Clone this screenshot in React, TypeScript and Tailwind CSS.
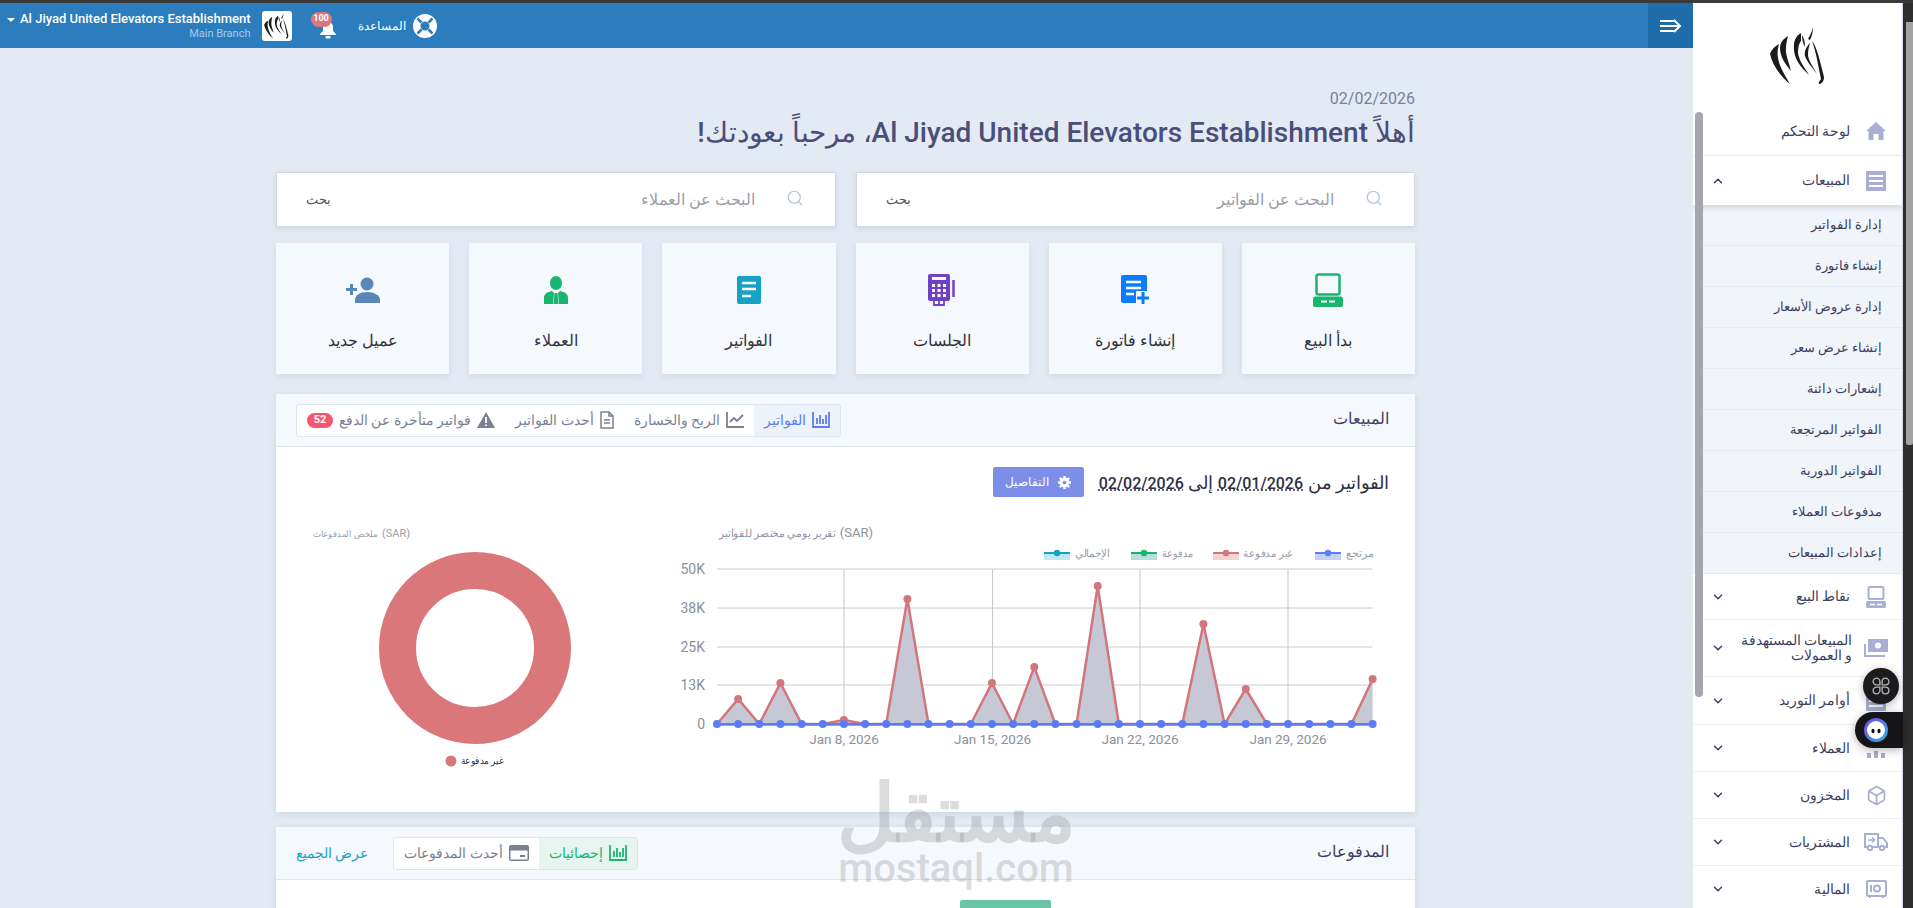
import { Box, ChevronDown, ChevronUp, Search } from "lucide-react";
import type { ReactNode } from "react";

const Horse = ({ className }: { className: string }) => (
  <svg viewBox="0 0 55 58" className={className} fill="#1b1b1b">
    <path d="M9 17C4 20 1 23 0 27 2 37 10 49 20 57 14 47 9 38 8 31 7 26 8 21 9 17Z" />
    <path d="M18 9C13 12 10 16 10 21 10 29 15 37 21 44 19 35 15 27 16 21 16 17 17 13 18 9Z" />
    <path d="M31 6C27 8 24 13 24 18 23 27 27 35 33 42 35 44 37 46 39 48 35 41 29 34 28 26 28 20 29 16 31 14 31 11 31 8 31 6Z" />
    <path d="M32 8C34 11 35 15 35 20 33 17 32 12 32 8Z" />
    <path d="M43 0C42 5 40 8 38 12L40 13C42 9 43 5 43 0Z" />
    <path d="M40 16C36 20 34 25 35 29 37 35 42 40 47 47 43 39 38 34 38 27 38 23 39 20 40 16Z" />
    <path d="M42 14C47 20 50 34 54 50 54 54 52 57 49 57 48 55 50 54 51 52 48 38 46 24 42 14Z" />
  </svg>
);

const HomeIcon = () => (
  <svg viewBox="0 0 20 18" className="w-5 h-[18px]" fill="#a9afd3">
    <path d="M10 0 20 9h-2.500v9h-5v-6h-5v6h-5V9H0Z" />
  </svg>
);
const ListIcon = () => (
  <svg viewBox="0 0 20 20" className="w-5 h-5">
    <rect width="20" height="20" fill="#a9afd3" />
    <path d="M3 5h14M3 10h14M3 15h14" stroke="#fff" strokeWidth="2" />
  </svg>
);
const PosIcon = () => (
  <svg viewBox="0 0 20 22" className="w-5 h-[22px]" fill="none">
    <rect x="2.500" y="1" width="15" height="12" rx="1.500" stroke="#a9afd3" strokeWidth="2" />
    <rect y="15" width="20" height="7" rx="1.500" fill="#a9afd3" />
    <path d="M4 18.500h5M11 18.500h5" stroke="#fff" strokeWidth="1.500" />
  </svg>
);
const MoneyIcon = () => (
  <svg viewBox="0 0 24 18" className="w-6 h-[18px]" fill="none">
    <rect x="4" y="0" width="20" height="13" fill="#a9afd3" />
    <circle cx="14" cy="6.500" r="3" fill="#fff" />
    <path d="M1 5v12h20" stroke="#a9afd3" strokeWidth="2" />
  </svg>
);
const TruckIcon = () => (
  <svg viewBox="0 0 24 18" className="w-6 h-[18px]" fill="none" stroke="#a9afd3" strokeWidth="2">
    <path d="M3 14H1V1h13v13H9M14 5h5l4 5v4h-2M14 14h1" />
    <circle cx="6" cy="15" r="2.200" />
    <circle cx="18" cy="15" r="2.200" />
    <path d="M4 7h6M8 4.500 10.500 7 8 9.500" strokeWidth="1.500" />
  </svg>
);
const SafeIcon = () => (
  <svg viewBox="0 0 21 18" className="w-[21px] h-[18px]" fill="none" stroke="#a9afd3" strokeWidth="2">
    <rect x="1" y="1" width="19" height="15" rx="1" />
    <circle cx="11" cy="8.500" r="3" />
    <path d="M5 5v7M4 17v1M17 17v1" />
  </svg>
);
const PeopleIcon = () => (
  <svg viewBox="0 0 20 20" className="w-5 h-5" fill="#a9afd3">
    <circle cx="10" cy="6" r="4" />
    <path d="M1 20v-5h4v5ZM8 20v-7h4v7ZM15 20v-5h4v5Z" />
  </svg>
);

type NavItem = { label: string; icon: ReactNode; h: string; mr: string };

const navRest: NavItem[] = [
  { label: "نقاط البيع", icon: <PosIcon />, h: "h-[46px]", mr: "mr-[14px]" },
  { label: "المبيعات المستهدفة و العمولات", icon: <MoneyIcon />, h: "h-[57px]", mr: "mr-[12px]" },
  { label: "أوامر التوريد", icon: <ListIcon />, h: "h-[48px]", mr: "mr-[14px]" },
  { label: "العملاء", icon: <PeopleIcon />, h: "h-[47px]", mr: "mr-[14px]" },
  { label: "المخزون", icon: <Box size={21} color="#a9afd3" strokeWidth={2} />, h: "h-[47px]", mr: "mr-[14px]" },
  { label: "المشتريات", icon: <TruckIcon />, h: "h-[47px]", mr: "mr-[14px]" },
  { label: "المالية", icon: <SafeIcon />, h: "h-[47px]", mr: "mr-[14px]" },
];

const subItems = [
  "إدارة الفواتير",
  "إنشاء فاتورة",
  "إدارة عروض الأسعار",
  "إنشاء عرض سعر",
  "إشعارات دائنة",
  "الفواتير المرتجعة",
  "الفواتير الدورية",
  "مدفوعات العملاء",
  "إعدادات المبيعات",
];

const Sidebar = () => (
  <aside className="relative w-[210px] shrink-0 bg-white border-r border-[#d3d9e4] overflow-hidden">
    <div className="h-[104px] flex items-center justify-center pt-[2px]">
      <Horse className="w-[55px] h-[58px]" />
    </div>
    <div className="h-[49px] flex items-center border-b border-[#eef0f4] pr-[15px]">
      <span className="w-[22px] flex justify-center"><HomeIcon /></span>
      <span className="mr-[15px] text-[14px] font-medium text-[#3d3f63]">لوحة التحكم</span>
    </div>
    <div className="relative h-[49px] flex items-center pr-[15px] shadow-[0_3px_6px_rgba(60,70,100,0.18)]">
      <span className="w-[22px] flex justify-center"><ListIcon /></span>
      <span className="mr-[15px] text-[14px] font-medium text-[#3d3f63]">المبيعات</span>
      <ChevronUp size={14} color="#3d3f63" strokeWidth={2.500} className="mr-auto ml-[18px]" />
    </div>
    <div className="bg-[#f1f4f9]">
      {subItems.map((s) => (
        <div key={s} className="h-[41px] flex items-center border-b border-[#e6eaf0] pr-[20px] text-[13px] font-medium text-[#3d3f63]">
          {s}
        </div>
      ))}
    </div>
    {navRest.map((n) => (
      <div key={n.label} className={`${n.h} flex items-center border-b border-[#eef0f4] pr-[14px]`}>
        <span className="w-[24px] flex justify-center shrink-0">{n.icon}</span>
        <span className={`${n.mr} w-[115px] text-[14px] leading-[15px] font-medium text-[#3d3f63]`}>{n.label}</span>
        <ChevronDown size={14} color="#3d3f63" strokeWidth={2.500} className="mr-auto ml-[18px] shrink-0" />
      </div>
    ))}
    <div className="absolute left-[2px] top-[109px] h-[585px] w-[8px] rounded-full bg-[#a6a7ae]" />
  </aside>
);

const Lifebuoy = () => (
  <svg viewBox="0 0 24 24" className="w-6 h-6">
    <circle cx="12" cy="12" r="12" fill="#fff" />
    <circle cx="12" cy="12" r="4.500" fill="#2b7dbd" />
    <path d="M4.500 4.500 8.500 8.500M19.500 4.500 15.500 8.500M4.500 19.500 8.500 15.500M19.500 19.500 15.500 15.500" stroke="#2b7dbd" strokeWidth="2.500" />
  </svg>
);

const Bell = () => (
  <svg viewBox="0 0 18 18" className="w-[18px] h-[18px]" fill="#fff">
    <path d="M9 1c3 0 5 2 5 5v4l3 3v1H1v-1l3-3V6c0-3 2-5 5-5Z" />
    <rect x="6.500" y="15" width="5" height="2.500" rx="1.200" />
  </svg>
);

const Topbar = () => (
  <header className="h-[45px] shrink-0 bg-[#2b7dbd] flex items-stretch justify-between">
    <div className="w-[45px] bg-[#1f6cab] flex items-center justify-center">
      <svg viewBox="0 0 22 14" className="w-[22px] h-[14px]" fill="none" stroke="#fff" strokeWidth="2">
        <path d="M0 2h14M0 7h19M0 12h14M14 1l6 6-6 6" />
      </svg>
    </div>
    <div className="flex items-center pl-[7px]">
      <Lifebuoy />
      <span className="mr-[7px] text-[12px] text-white">المساعدة</span>
      <div className="relative mr-[21px] w-[18px] h-[18px] mt-[8px]">
        <Bell />
        <span className="absolute -top-[9px] left-[-8px] w-[21px] h-[15px] rounded-full bg-[#d9777b] text-white text-[9px] font-bold flex items-center justify-center">100</span>
      </div>
      <div className="mr-[27px] w-[30px] h-[30px] rounded-[3px] bg-white flex items-center justify-center">
        <Horse className="w-[25px] h-[26px]" />
      </div>
      <div className="mr-[11px] flex flex-col items-start leading-none">
        <span dir="ltr" className="text-[13px] font-medium text-white">Al Jiyad United Elevators Establishment</span>
        <span dir="ltr" className="mt-[3px] text-[11px] text-[#a5c9ea]">Main Branch</span>
      </div>
      <div className="mr-[5px] mb-[12px] border-x-[4px] border-x-transparent border-t-[4px] border-t-white" />
    </div>
  </header>
);

const SearchBox = ({ placeholder }: { placeholder: string }) => (
  <div className="h-[55px] bg-white border border-[#d4d8e0] shadow-[0_2px_5px_rgba(80,90,120,0.12)] flex items-center pr-[31px] pl-[29px]">
    <Search size={18} color="#b5c3d4" strokeWidth={1.600} className="mb-[3px]" />
    <span className="mr-[31px] text-[16px] text-[#9a9ea8]">{placeholder}</span>
    <span className="mr-auto text-[13px] text-[#54566b]">بحث</span>
  </div>
);

const CardPos = () => (
  <svg viewBox="0 0 30 34" className="w-[30px] h-[34px]" fill="none">
    <rect x="3.500" y="1.500" width="23" height="20" rx="2" stroke="#19b56f" strokeWidth="2.500" />
    <rect y="23.500" width="30" height="10.500" rx="2" fill="#19b56f" />
    <path d="M8 28.500h6M16 28.500h6" stroke="#fff" strokeWidth="2" />
  </svg>
);
const CardInvoice = () => (
  <svg viewBox="0 0 30 30" className="w-[30px] h-[30px]">
    <path d="M3 0h22a2 2 0 0 1 2 2v14H16v12H3a2 2 0 0 1-2-2V2a2 2 0 0 1 2-2Z" fill="#0a7cff" />
    <path d="M6 7h15M6 13h15M6 19h8" stroke="#fff" strokeWidth="2.500" />
    <path d="M23 17v12M17 23h12" stroke="#0a7cff" strokeWidth="3" />
  </svg>
);
const CardCalc = () => (
  <svg viewBox="0 0 28 32" className="w-[28px] h-[32px]" fill="none">
    <rect x="0" y="0" width="22" height="27" rx="2" fill="#7040c8" />
    <rect x="4" y="3" width="14" height="3" fill="#fff" />
    <path d="M4 10h3v3H4ZM9.500 10h3v3h-3ZM15 10h3v3h-3ZM4 15h3v3H4ZM9.500 15h3v3h-3ZM15 15h3v3h-3ZM4 20h3v3H4ZM9.500 20h3v3h-3ZM15 20h3v3h-3Z" fill="#fff" />
    <path d="M25.500 6v17" stroke="#7040c8" strokeWidth="2.500" />
    <path d="M6 27v4h10v-4M11 27v4" stroke="#7040c8" strokeWidth="1.800" />
  </svg>
);
const CardDoc = () => (
  <svg viewBox="0 0 24 28" className="w-[24px] h-[28px]">
    <rect width="24" height="28" rx="2" fill="#14a3c4" />
    <path d="M5 7h14M5 13h14M5 20h9" stroke="#fff" strokeWidth="2.600" />
  </svg>
);
const CardPerson = () => (
  <svg viewBox="0 0 24 28" className="w-[24px] h-[28px]" fill="#19b56f">
    <ellipse cx="12" cy="7" rx="6" ry="7" />
    <path d="M0 28v-6c0-4 3-6 8-7l2 2-1 11ZM24 28v-6c0-4-3-6-8-7l-2 2 1 11Z" />
    <path d="M10.500 17h3l1 11h-5Z" />
  </svg>
);
const CardAddUser = () => (
  <svg viewBox="0 0 34 26" className="w-[34px] h-[26px]" fill="#5a87b8">
    <circle cx="21" cy="7" r="6.500" />
    <path d="M9 26v-3c0-5 5-8 12-8s13 3 13 8v3Z" />
    <path d="M0 11h11v3H0ZM4 7h3v11H4Z" />
  </svg>
);

const actions: { label: string; icon: ReactNode }[] = [
  { label: "بدأ البيع", icon: <CardPos /> },
  { label: "إنشاء فاتورة", icon: <CardInvoice /> },
  { label: "الجلسات", icon: <CardCalc /> },
  { label: "الفواتير", icon: <CardDoc /> },
  { label: "العملاء", icon: <CardPerson /> },
  { label: "عميل جديد", icon: <CardAddUser /> },
];

const BarsIcon = ({ color }: { color: string }) => (
  <svg viewBox="0 0 18 16" className="w-[18px] h-4 shrink-0" fill="none" stroke={color}>
    <path d="M1 0v15h16V0" strokeWidth="1.800" />
    <path d="M5 12V6M8 12V3M11 12V7M14 12V3" strokeWidth="1.800" />
  </svg>
);
const LineChartIcon = () => (
  <svg viewBox="0 0 18 16" className="w-[18px] h-4 shrink-0" fill="none" stroke="#7a7f92" strokeWidth="1.800">
    <path d="M1 0v15h17M4 10l4-4 3 3 6-6" />
  </svg>
);
const FileIcon = () => (
  <svg viewBox="0 0 14 18" className="w-[14px] h-[18px] shrink-0" fill="none" stroke="#7a7f92" strokeWidth="1.500">
    <path d="M1 1h8l4 4v12H1ZM9 1v4h4M4 9h6M4 12h6" />
  </svg>
);
const WarnIcon = () => (
  <svg viewBox="0 0 18 16" className="w-[18px] h-4 shrink-0">
    <path d="M9 0 18 16H0Z" fill="#7a7f92" />
    <path d="M9 5v6M9 12.500v1.500" stroke="#fff" strokeWidth="1.800" />
  </svg>
);
const CardIcon = () => (
  <svg viewBox="0 0 20 16" className="w-5 h-4 shrink-0">
    <rect width="20" height="16" rx="2" fill="#7a7f92" />
    <rect x="1.500" y="5.500" width="17" height="9" fill="#fff" />
    <path d="M11 11h5" stroke="#7a7f92" strokeWidth="2" />
  </svg>
);
const GearIcon = () => (
  <svg viewBox="0 0 14 14" className="w-[13px] h-[13px]">
    <path d="M7 0v14M0 7h14M2 2l10 10M12 2 2 12" stroke="#fff" strokeWidth="2.600" />
    <circle cx="7" cy="7" r="5" fill="#fff" />
    <circle cx="7" cy="7" r="2" fill="#7d8ee8" />
  </svg>
);

const pts = [724, 699, 724, 683, 724, 724, 720, 724, 724, 599, 724, 724, 724, 683, 724, 667, 724, 724, 586, 724, 724, 724, 724, 624, 724, 689, 724, 724, 724, 724, 724, 679];
const px = (i: number) => 40 + i * 21.15;
const py = (y: number) => y - 524;
const redLine = pts.map((y, i) => `${i ? "L" : "M"}${px(i)} ${py(y)}`).join(" ");

const legend = [
  { label: "مرتجع", x: 697, w: 28, sx: 638, color: "#5b7cf5", fill: "#c5d0f5" },
  { label: "غير مدفوعة", x: 616, w: 50, sx: 536, color: "#d3767c", fill: "#f3d3d4" },
  { label: "مدفوعة", x: 516, w: 31, sx: 454, color: "#19b56f", fill: "#b7dfe0" },
  { label: "الإجمالي", x: 433, w: 35, sx: 367, color: "#14a3c4", fill: "#bfe8f5" },
];

const LineChart = () => (
  <svg direction="ltr" viewBox="0 0 712 252" className="w-[712px] h-[252px] shrink-0">
    <text x="196" y="13" textAnchor="end" fontSize="13" fill="#8f93a0">(SAR)</text>
    <text x="159" y="13" direction="rtl" fontSize="10.500" textLength={117} lengthAdjust="spacingAndGlyphs" fill="#8f93a0">تقرير يومي مختصر للفواتير</text>
    {legend.map((l) => (
      <g key={l.label}>
        <rect x={l.sx} y="28" width="26" height="8" fill={l.fill} />
        <path d={`M${l.sx} 29h26`} stroke={l.color} strokeWidth="2" />
        <circle cx={l.sx + 13} cy="29" r="3.200" fill={l.color} />
        <text x={l.x} y="33" direction="rtl" fontSize="11" textLength={l.w} lengthAdjust="spacingAndGlyphs" fill="#9a9ea8">{l.label}</text>
      </g>
    ))}
    {[45, 84, 123, 161, 200].map((y) => (
      <path key={y} d={`M40 ${y}H695.500`} stroke="#c9ccd1" strokeWidth="1" />
    ))}
    {[167, 315.5, 463, 611].map((x) => (
      <path key={x} d={`M${x} 45V200`} stroke="#c4c7cc" strokeWidth="1" />
    ))}
    {[
      ["50K", 45],
      ["38K", 84],
      ["25K", 123],
      ["13K", 161],
      ["0", 200],
    ].map(([t, y]) => (
      <text key={t} x="28" y={Number(y) + 5} textAnchor="end" fontSize="14" fill="#8a8f9c">{t}</text>
    ))}
    {[
      ["Jan 8, 2026", 167],
      ["Jan 15, 2026", 315.5],
      ["Jan 22, 2026", 463],
      ["Jan 29, 2026", 611],
    ].map(([t, x]) => (
      <text key={t} x={x} y="220" textAnchor="middle" fontSize="13.500" fill="#8a8f9c">{t}</text>
    ))}
    <path d={`${redLine} L${px(31)} 200 L40 200Z`} fill="#c6c9d5" />
    <path d={redLine} fill="none" stroke="#d3767c" strokeWidth="2.500" />
    {pts.map((y, i) => y !== 724 && <circle key={i} cx={px(i)} cy={py(y)} r="4" fill="#d3767c" />)}
    <path d="M40 201H695.500" stroke="#19b5a0" strokeWidth="1.500" />
    <path d="M40 200H695.500" stroke="#5b7cf5" strokeWidth="2" />
    {pts.map((_, i) => (
      <circle key={i} cx={px(i)} cy="200" r="4" fill="#5b7cf5" />
    ))}
  </svg>
);

const Donut = () => (
  <svg direction="ltr" viewBox="0 0 375 252" className="w-[375px] h-[252px] shrink-0">
    <text x="108" y="13" textAnchor="end" fontSize="11" fill="#9a9ea8">(SAR)</text>
    <text x="76" y="13" direction="rtl" fontSize="9" textLength={65} lengthAdjust="spacingAndGlyphs" fill="#9a9ea8">ملخص المدفوعات</text>
    <circle cx="173" cy="124" r="77.500" fill="none" stroke="#d9777b" strokeWidth="37" />
    <circle cx="149" cy="237" r="5.500" fill="#d9777b" />
    <text x="201" y="240" direction="rtl" fontSize="9.500" textLength={42} lengthAdjust="spacingAndGlyphs" fill="#333">غير مدفوعة</text>
  </svg>
);

const Tab = ({ icon, label, active, tone, badge }: { icon: ReactNode; label: string; active?: boolean; tone?: string; badge?: string }) => (
  <div className={`h-full flex items-center gap-[6px] px-[10px] text-[14px] ${active ? tone : "text-[#7a7f92]"}`}>
    {icon}
    <span>{label}</span>
    {badge && <span className="w-[26px] h-[15px] rounded-full bg-[#f5566e] text-white text-[11px] font-bold flex items-center justify-center">{badge}</span>}
  </div>
);

const App = () => (
  <div dir="rtl" className="w-[1913px] h-[908px] overflow-hidden bg-[#2e2e2e] font-['Roboto','Noto_Sans',sans-serif] flex flex-col">
    <div className="h-[3px] shrink-0 bg-[#3a3a3a]" />
    <div className="flex-1 min-h-0 flex">
      <div className="w-[10px] shrink-0 relative">
        <div className="absolute top-[19px] right-0 w-[7px] h-[423px] rounded-b-[2px] bg-[#a3a3a3]" />
      </div>
      <Sidebar />
      <main className="relative flex-1 min-w-0 bg-[#e4eaf3] flex flex-col overflow-hidden">
        <Topbar />
        <div className="w-[1139px] mr-[278px] pt-[40px]">
          <div dir="ltr" className="text-right text-[16px] leading-[22px] text-[#7a8099]">02/02/2026</div>
          <h1 className="mt-[8px] text-[28px] leading-[30px] font-medium text-[#4a4e7a]">
            أهلاً Al Jiyad United Elevators Establishment، مرحباً بعودتك!
          </h1>
          <div className="mt-[24px] grid grid-cols-2 gap-[20px]">
            <SearchBox placeholder="البحث عن الفواتير" />
            <SearchBox placeholder="البحث عن العملاء" />
          </div>
          <div className="mt-[16px] grid grid-cols-6 gap-[20px]">
            {actions.map((a) => (
              <div key={a.label} className="h-[131px] bg-[#f5f8fc] shadow-[0_2px_6px_rgba(80,90,120,0.10)] flex flex-col items-center">
                <div className="h-[34px] mt-[30px] flex items-center">{a.icon}</div>
                <span className="mt-[22px] text-[16px] leading-[24px] text-[#33333d]">{a.label}</span>
              </div>
            ))}
          </div>
          <section className="mt-[20px] bg-white shadow-[0_2px_6px_rgba(80,90,120,0.15)]">
            <div className="h-[53px] bg-[#f5f8fc] border-b border-[#dfe5ee] flex items-center justify-between px-[26px] pl-[20px]">
              <h2 className="text-[15.500px] font-medium text-[#3d3f63]">المبيعات</h2>
              <div className="h-[33px] bg-white border border-[#dfe5ee] rounded-[3px] flex items-center overflow-hidden">
                <div className="h-full bg-[#eef3fb]">
                  <Tab active tone="text-[#5b7cf5]" icon={<BarsIcon color="#5b7cf5" />} label="الفواتير" />
                </div>
                <Tab icon={<LineChartIcon />} label="الربح والخسارة" />
                <Tab icon={<FileIcon />} label="أحدث الفواتير" />
                <Tab icon={<WarnIcon />} label="فواتير متأخرة عن الدفع" badge="52" />
              </div>
            </div>
            <div className="h-[365px] px-[26px] pt-[20px]">
              <div className="flex items-center gap-[15px]">
                <h3 className="text-[18px] font-medium text-[#2d2f45]">
                  الفواتير من <span className="text-[16px] underline decoration-dotted">02/01/2026</span> إلى <span className="text-[16px] underline decoration-dotted">02/02/2026</span>
                </h3>
                <button className="h-[30px] w-[91px] rounded-[2px] bg-[#7d8ee8] text-white text-[12px] flex items-center justify-center gap-[9px]">
                  <GearIcon />
                  التفاصيل
                </button>
              </div>
              <div className="mt-[27px] flex">
                <LineChart />
                <Donut />
              </div>
            </div>
          </section>
          <section className="mt-[15px] bg-white shadow-[0_2px_6px_rgba(80,90,120,0.15)]">
            <div className="h-[53px] bg-[#f5f8fc] border-b border-[#dfe5ee] flex items-center px-[26px] pl-[20px]">
              <h2 className="text-[15.500px] font-medium text-[#3d3f63]">المدفوعات</h2>
              <div className="mr-auto h-[33px] bg-white border border-[#dfe5ee] rounded-[3px] flex items-center overflow-hidden">
                <div className="h-full bg-[#e6f5ef]">
                  <Tab active tone="text-[#19b56f]" icon={<BarsIcon color="#19b56f" />} label="إحصائيات" />
                </div>
                <Tab icon={<CardIcon />} label="أحدث المدفوعات" />
              </div>
              <span className="mr-[25px] text-[14px] text-[#19a3c6]">عرض الجميع</span>
            </div>
            <div className="h-[60px] px-[26px] pt-[20px]">
              <div className="flex items-center gap-[21px]">
                <h3 className="text-[18px] font-medium text-[#2d2f45]">
                  المدفوعات من <span className="text-[16px]">02/01/2026</span> إلى <span className="text-[16px]">02/02/2026</span>
                </h3>
                <div className="h-[30px] w-[91px] rounded-[2px] bg-[#69c5a8]" />
              </div>
            </div>
          </section>
        </div>
        <div className="absolute left-[840px] top-[769px] w-[232px] flex flex-col items-center text-[#8a8a8a]/30 pointer-events-none">
          <span className="text-[80px] leading-[84px] font-bold">مستقل</span>
          <span dir="ltr" className="text-[40px] leading-[26px] font-medium">mostaql.com</span>
        </div>
      </main>
    </div>
    <div className="absolute left-[1863px] top-[668px] w-[36px] h-[36px] rounded-full bg-[#1b1b1d] shadow-[0_2px_8px_rgba(0,0,0,0.3)] flex items-center justify-center">
      <svg viewBox="0 0 16 16" className="w-[18px] h-[18px]" fill="none" stroke="#b5b5b5" strokeWidth="1.200">
        <path d="M7 7H4a3 3 0 1 1 3-3ZM9 7h3a3 3 0 1 0-3-3ZM7 9H4a3 3 0 1 0 3 3ZM9 9h3a3 3 0 1 1-3 3Z" />
      </svg>
    </div>
    <div dir="ltr" className="absolute left-[1855px] top-[712px] w-[48px] h-[36px] rounded-l-full bg-[#151517] shadow-[0_2px_10px_rgba(0,0,0,0.3)] flex items-center pl-[9px]">
      <svg viewBox="0 0 24 24" className="w-[24px] h-[24px]">
        <defs>
          <linearGradient id="botRing" x1="0" y1="0" x2="1" y2="1">
            <stop offset="0" stopColor="#7a3cf0" />
            <stop offset="1" stopColor="#29b6e8" />
          </linearGradient>
        </defs>
        <circle cx="12" cy="12" r="12" fill="url(#botRing)" />
        <circle cx="12" cy="12" r="9" fill="#fff" />
        <ellipse cx="9" cy="13" rx="1.600" ry="2.300" fill="#111" />
        <ellipse cx="15" cy="13" rx="1.600" ry="2.300" fill="#111" />
      </svg>
    </div>
  </div>
);

export default App;
